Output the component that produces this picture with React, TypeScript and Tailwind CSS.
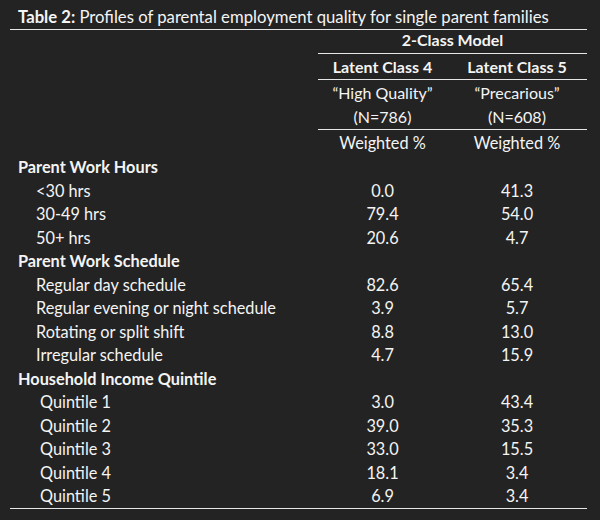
const rows: { label: string; a?: string; b?: string; kind: "head" | "item" | "q" }[] = [
  { label: "Parent Work Hours", kind: "head" },
  { label: "<30 hrs", a: "0.0", b: "41.3", kind: "item" },
  { label: "30-49 hrs", a: "79.4", b: "54.0", kind: "item" },
  { label: "50+ hrs", a: "20.6", b: "4.7", kind: "item" },
  { label: "Parent Work Schedule", kind: "head" },
  { label: "Regular day schedule", a: "82.6", b: "65.4", kind: "item" },
  { label: "Regular evening or night schedule", a: "3.9", b: "5.7", kind: "item" },
  { label: "Rotating or split shift", a: "8.8", b: "13.0", kind: "item" },
  { label: "Irregular schedule", a: "4.7", b: "15.9", kind: "item" },
  { label: "Household Income Quintile", kind: "head" },
  { label: "Quintile 1", a: "3.0", b: "43.4", kind: "q" },
  { label: "Quintile 2", a: "39.0", b: "35.3", kind: "q" },
  { label: "Quintile 3", a: "33.0", b: "15.5", kind: "q" },
  { label: "Quintile 4", a: "18.1", b: "3.4", kind: "q" },
  { label: "Quintile 5", a: "6.9", b: "3.4", kind: "q" },
];

export default function App() {
  return (
    <div
      className="w-[600px] h-[520px] bg-[#232323] text-[#f4f4f4] text-[16.3px] overflow-hidden"
      style={{ fontFamily: "Lato, 'Open Sans', sans-serif" }}
    >
      <div className="ml-[10px] w-[577px]">
        {/* title */}
        <div className="h-[30px] border-b border-[#e6e6e6] pt-[5px] pl-[8px] leading-[24px] text-[16.7px] whitespace-nowrap">
          <span className="font-bold">Table 2:</span> Profiles of parental employment quality for single parent families
        </div>

        {/* header */}
        <div className="grid grid-cols-[308px_129px_140px] text-[16px]">
          <div />
          <div className="col-span-2 h-[24px] border-b border-[#e6e6e6] leading-[20px] font-bold text-center">
            2-Class Model
          </div>

          <div />
          <div className="h-[26px] border-b border-[#e6e6e6] leading-[25px] font-bold text-center">
            Latent Class 4
          </div>
          <div className="h-[26px] border-b border-[#e6e6e6] leading-[25px] font-bold text-center">
            Latent Class 5
          </div>

          <div />
          <div className="h-[50px] border-b border-[#e6e6e6] pt-[1px] leading-[24px] text-center">
            <div>“High Quality”</div>
            <div>(N=786)</div>
          </div>
          <div className="h-[50px] border-b border-[#e6e6e6] pt-[1px] leading-[24px] text-center">
            <div>“Precarious”</div>
            <div>(N=608)</div>
          </div>

          <div />
          <div className="h-[25px] leading-[25px] text-center text-[16.3px]">Weighted %</div>
          <div className="h-[25px] leading-[25px] text-center text-[16.3px]">Weighted %</div>
        </div>

        {/* body */}
        <div className="border-b border-[#e6e6e6]">
          {rows.map((r) => (
            <div key={r.label} className="grid grid-cols-[308px_129px_140px] h-[23.5px] leading-[23.5px]">
              <div
                className={
                  r.kind === "head"
                    ? "pl-[8px] font-bold whitespace-nowrap"
                    : r.kind === "q"
                    ? "pl-[30px] whitespace-nowrap"
                    : "pl-[26px] whitespace-nowrap"
                }
              >
                {r.label}
              </div>
              <div className="text-center">{r.a}</div>
              <div className="text-center">{r.b}</div>
            </div>
          ))}
        </div>
      </div>
    </div>
  );
}
